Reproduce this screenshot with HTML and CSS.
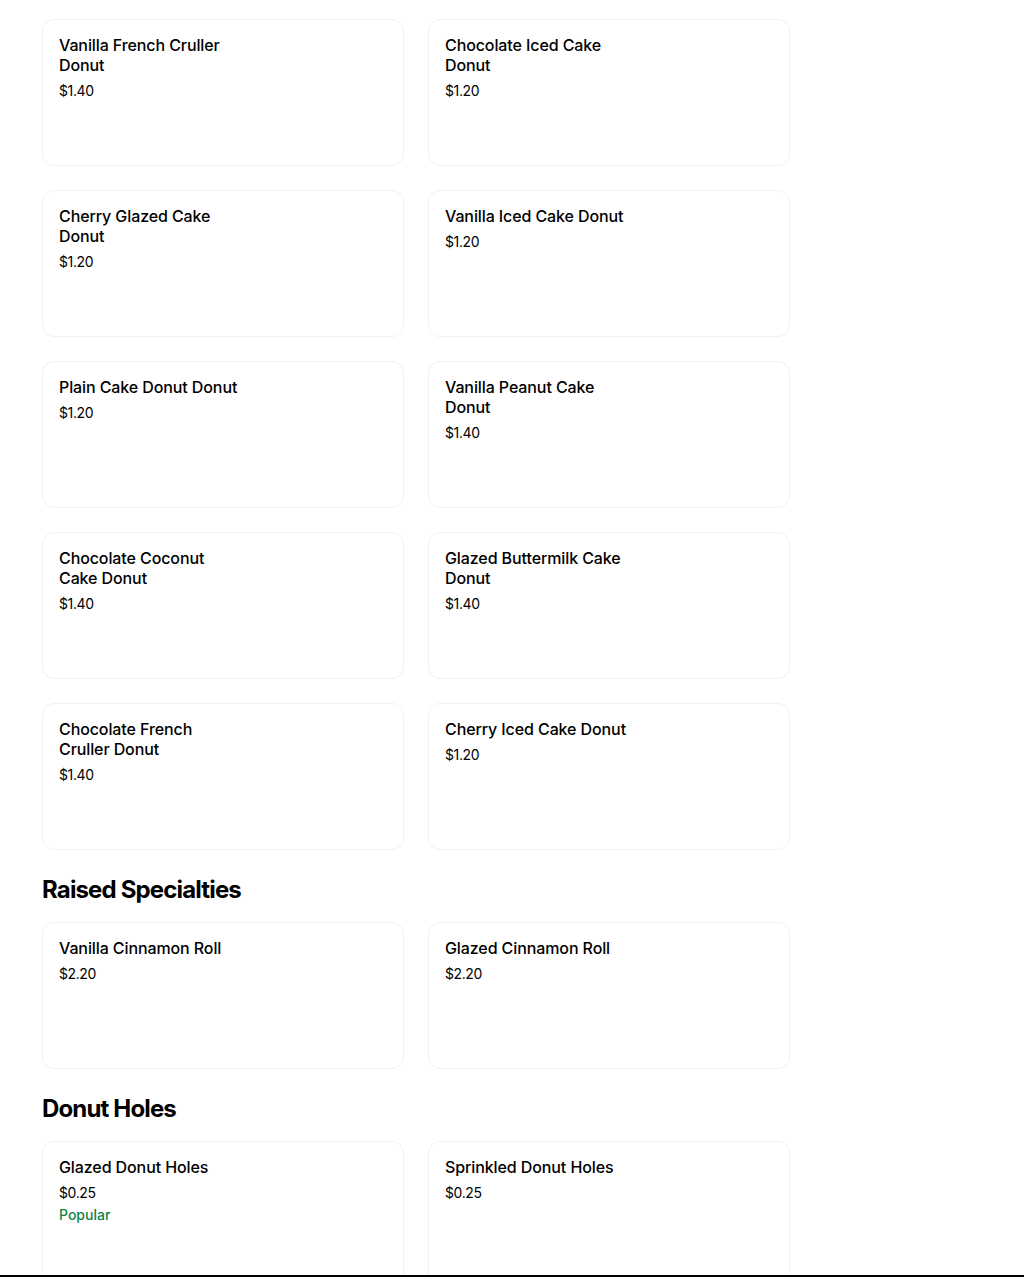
FILE: index.html
```html
<!DOCTYPE html>
<html lang="en">
<head>
<meta charset="utf-8">
<title>Menu</title>
<link rel="stylesheet" href="styles.css">
</head>
<body>
<main class="menu">
  <section class="section">
    <div class="grid">
      <div class="card"><div class="info"><div class="title">Vanilla French Cruller Donut</div><div class="price">$1.40</div></div></div>
      <div class="card"><div class="info"><div class="title">Chocolate Iced Cake Donut</div><div class="price">$1.20</div></div></div>
      <div class="card"><div class="info"><div class="title">Cherry Glazed Cake Donut</div><div class="price">$1.20</div></div></div>
      <div class="card"><div class="info"><div class="title">Vanilla Iced Cake Donut</div><div class="price">$1.20</div></div></div>
      <div class="card"><div class="info"><div class="title">Plain Cake Donut Donut</div><div class="price">$1.20</div></div></div>
      <div class="card"><div class="info"><div class="title">Vanilla Peanut Cake Donut</div><div class="price">$1.40</div></div></div>
      <div class="card"><div class="info"><div class="title">Chocolate Coconut Cake Donut</div><div class="price">$1.40</div></div></div>
      <div class="card"><div class="info"><div class="title">Glazed Buttermilk Cake Donut</div><div class="price">$1.40</div></div></div>
      <div class="card"><div class="info"><div class="title">Chocolate French Cruller Donut</div><div class="price">$1.40</div></div></div>
      <div class="card"><div class="info"><div class="title">Cherry Iced Cake Donut</div><div class="price">$1.20</div></div></div>
    </div>
  </section>
  <section class="section">
    <h2 class="heading">Raised Specialties</h2>
    <div class="grid">
      <div class="card"><div class="info"><div class="title">Vanilla Cinnamon Roll</div><div class="price">$2.20</div></div></div>
      <div class="card"><div class="info"><div class="title">Glazed Cinnamon Roll</div><div class="price">$2.20</div></div></div>
    </div>
  </section>
  <section class="section">
    <h2 class="heading">Donut Holes</h2>
    <div class="grid">
      <div class="card"><div class="info"><div class="title">Glazed Donut Holes</div><div class="price">$0.25</div><div class="badge">Popular</div></div></div>
      <div class="card"><div class="info"><div class="title">Sprinkled Donut Holes</div><div class="price">$0.25</div></div></div>
    </div>
  </section>
</main>
<div class="bottom-bar"></div>
</body>
</html>
```

FILE: styles.css
```css
* { box-sizing: border-box; }
html, body { margin: 0; padding: 0; background: #fff; }
body {
  font-family: Inter, "Noto Sans", "Liberation Sans", sans-serif;
  color: #000;
}
.menu {
  padding: 19px 0 0 42px;
  width: 790px;
}
.section + .section .heading { margin-top: 24px; }
.heading {
  margin: 0 0 16px;
  font-size: 24px;
  line-height: 32px;
  font-weight: 700;
  letter-spacing: -0.85px;
}
.grid {
  display: grid;
  grid-template-columns: 362px 362px;
  gap: 24px;
}
.card {
  height: 147px;
  border: 1px solid #f1f1f1;
  border-radius: 12px;
  padding: 15px 16px;
  display: flex;
}
.info {
  width: 184px;
  display: flex;
  flex-direction: column;
}
.title {
  font-size: 16px;
  line-height: 20px;
  font-weight: 500;
  letter-spacing: -0.1px;
}
.price {
  margin-top: 6px;
  font-size: 14px;
  line-height: 20px;
  font-weight: 400;
  letter-spacing: -0.4px;
  color: #000;
}
.badge {
  margin-top: 2px;
  font-size: 14px;
  line-height: 20px;
  font-weight: 500;
  color: #0e8345;
}
.bottom-bar {
  position: fixed;
  left: 0;
  right: 0;
  bottom: 0;
  height: 2px;
  background: #000;
}
```
